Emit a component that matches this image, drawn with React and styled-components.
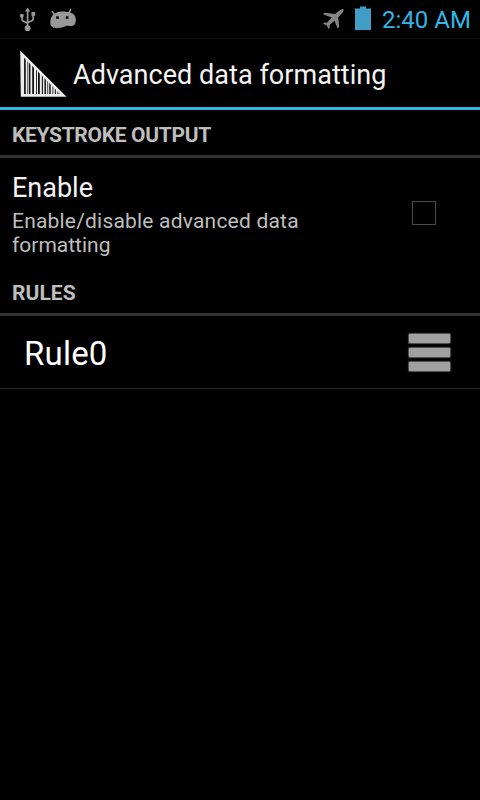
import React from "react";
import styled, { createGlobalStyle } from "styled-components";

const GlobalStyle = createGlobalStyle`
  * { box-sizing: border-box; }
  body { margin: 0; background: #000; font-family: Roboto, "Liberation Sans", sans-serif; }
`;

const Screen = styled.div`
  width: 480px;
  height: 800px;
  background: #000;
  overflow: hidden;
  display: flex;
  flex-direction: column;
`;

const StatusBar = styled.div`
  height: 39px;
  flex: none;
  display: flex;
  justify-content: space-between;
  border-bottom: 1px solid #0e0e0e;
  padding: 0 10px 0 16px;
`;

const StatusGroup = styled.div`
  display: flex;
  height: 38px;
`;

const Clock = styled.time`
  font-size: 24px;
  line-height: 41px;
  color: #33b5e5;
  width: 88px;
  margin-left: 8px;
  white-space: nowrap;
`;

const ActionBar = styled.header`
  height: 71px;
  flex: none;
  display: flex;
  border-bottom: 3px solid #33b5e5;
  padding-left: 14px;
`;

const Title = styled.h1`
  margin: 0 0 0 3px;
  padding-top: 3px;
  font-size: 27px;
  font-weight: 400;
  line-height: 66px;
  letter-spacing: 0.04px;
  color: #f3f3f3;
  white-space: nowrap;
`;

const SectionTitle = styled.h2`
  margin: 0;
  height: 48px;
  flex: none;
  border-bottom: 3px solid #333;
  padding: 4px 12px 0;
  font-size: 21px;
  font-weight: 700;
  line-height: 43px;
  letter-spacing: ${(p) => p.$spacing}px;
  color: #bebebe;
`;

const Preference = styled.div`
  height: 110px;
  flex: none;
  display: flex;
  justify-content: space-between;
  padding: 14px 44px 0 12px;
`;

const PreferenceText = styled.div`
  width: 320px;
`;

const PreferenceTitle = styled.div`
  font-size: 27px;
  line-height: 32px;
  color: #f3f3f3;
`;

const Summary = styled.div`
  margin-top: 5px;
  font-size: 21px;
  line-height: 24px;
  color: #bebebe;
`;

const SummaryRun = styled.span`
  letter-spacing: ${(p) => p.$spacing}px;
`;

const Checkbox = styled.button`
  width: 24px;
  height: 24px;
  margin: 29px 0 0;
  padding: 0;
  border: 1px solid #484848;
  background: transparent;
`;

const RuleRow = styled.div`
  height: 73px;
  flex: none;
  display: flex;
  justify-content: space-between;
  padding: 0 30px 0 24px;
  border-bottom: 1px solid #272727;
`;

const RuleName = styled.span`
  padding-top: 2px;
  font-size: 33px;
  line-height: 72px;
  letter-spacing: 0.2px;
  color: #fff;
`;

const Grip = styled.div`
  display: flex;
  flex-direction: column;
  gap: 5px;
  padding-top: 18px;
`;

const GripBar = styled.div`
  width: 41px;
  height: 9px;
  border-radius: 1px;
  background: #a0a0a0;
  box-shadow: 0 0 1px 1px #585858;
`;

const UsbIcon = () => (
  <svg width="26" height="38" viewBox="16 0 26 38" fill="none" stroke="#989898" strokeWidth="1.7">
    <path d="M27.6 27V11M22 17v2.2q0 1.4 1.4 2l4.2 2M33.2 15v3.7q0 1.4-1.4 2l-4.2 1.8" />
    <path d="M25 11.4L27.6 7.4L30.2 11.4z" fill="#989898" stroke="none" />
    <circle cx="27.6" cy="28.2" r="2.9" fill="#989898" stroke="none" />
    <circle cx="21.8" cy="15.8" r="2" fill="#989898" stroke="none" />
    <rect x="31.4" y="12" width="3.8" height="3.8" fill="#989898" stroke="none" />
  </svg>
);

const JellyIcon = () => (
  <svg width="36" height="38" viewBox="42 0 36 38">
    <path d="M52.4 11.6l2.4 3.6M70.6 9.4l-1.6 3.8" stroke="#989898" strokeWidth="1.6" strokeLinecap="round" />
    <path
      d="M50.3 21.5C50.6 15.8 54.5 12.8 59 11.8C63.5 11 69.5 11.3 73 13.8C76.2 16.2 76.8 21.5 74.8 24.2C73 26.6 70.6 26.2 68.3 25.8C66 25.3 64.2 27.2 61.5 27.6C59 28 54.5 28.8 52.2 27C50.5 25.6 50.2 23.4 50.3 21.5Z"
      fill="#989898"
    />
    <rect x="56.2" y="16.3" width="2.6" height="2.5" fill="#000" />
    <rect x="65.8" y="16.3" width="2.6" height="2.5" fill="#000" />
  </svg>
);

const PlaneIcon = () => (
  <svg width="30" height="38" viewBox="318 0 30 38">
    <path
      d="M343.5 9.2Q344 10.3 342.9 12L338.2 17.4L339.2 27L337.7 28.6L334.4 20.8L329.4 25.2L329.8 27.8L328.6 29L326.8 25.6L323 23.6L324.2 22.4L327 22.8L331.6 17.6L323 14.2L324.6 12.8L335 14L340.6 9.8Q342.6 8.6 343.5 9.2Z"
      fill="#858585"
    />
  </svg>
);

const BatteryIcon = () => (
  <svg width="26" height="38" viewBox="348 0 26 38">
    <path d="M360 6.5h6v2h5V30h-16V8.5h5z" fill="#419dc3" />
  </svg>
);

const BARS = [
  [24, 1.8, "#222"], [27, 1.4, "#777"], [29, 1.4, "#111"], [32.2, 1.8, "#161616"],
  [36, 1, "#333"], [38, 1.8, "#111"], [41.8, 1.2, "#222"], [44.4, 1.6, "#222"],
  [47.2, 1, "#444"], [49.2, 1.6, "#222"], [52, 1.6, "#777"], [54.8, 1.2, "#333"],
  [57, 4, "#777"],
];

const BarcodeLogo = () => (
  <svg width="56" height="68" viewBox="14 39 56 68">
    <defs>
      <clipPath id="triangle">
        <path d="M24 57.8L60.2 94H24Z" />
      </clipPath>
    </defs>
    <path d="M20.2 50.6L66.5 96.8H20.8Z" fill="#ededed" />
    <g clipPath="url(#triangle)">
      {BARS.map(([x, width, color]) => (
        <rect key={x} x={x} y="55" width={width} height="39" fill={color} />
      ))}
    </g>
  </svg>
);

export default function App() {
  return (
    <Screen>
      <GlobalStyle />
      <StatusBar>
        <StatusGroup>
          <UsbIcon />
          <JellyIcon />
        </StatusGroup>
        <StatusGroup>
          <PlaneIcon />
          <BatteryIcon />
          <Clock>2:40 AM</Clock>
        </StatusGroup>
      </StatusBar>
      <ActionBar>
        <BarcodeLogo />
        <Title>Advanced data formatting</Title>
      </ActionBar>
      <SectionTitle $spacing={-0.32}>KEYSTROKE OUTPUT</SectionTitle>
      <Preference>
        <PreferenceText>
          <PreferenceTitle>Enable</PreferenceTitle>
          <Summary>
            <SummaryRun $spacing={0.2}>Enable/disable advanced data </SummaryRun>
            <SummaryRun $spacing={0}>formatting</SummaryRun>
          </Summary>
        </PreferenceText>
        <Checkbox role="checkbox" aria-checked="false" aria-label="Enable" />
      </Preference>
      <SectionTitle $spacing={0.04}>RULES</SectionTitle>
      <RuleRow>
        <RuleName>Rule0</RuleName>
        <Grip>
          <GripBar />
          <GripBar />
          <GripBar />
        </Grip>
      </RuleRow>
    </Screen>
  );
}
